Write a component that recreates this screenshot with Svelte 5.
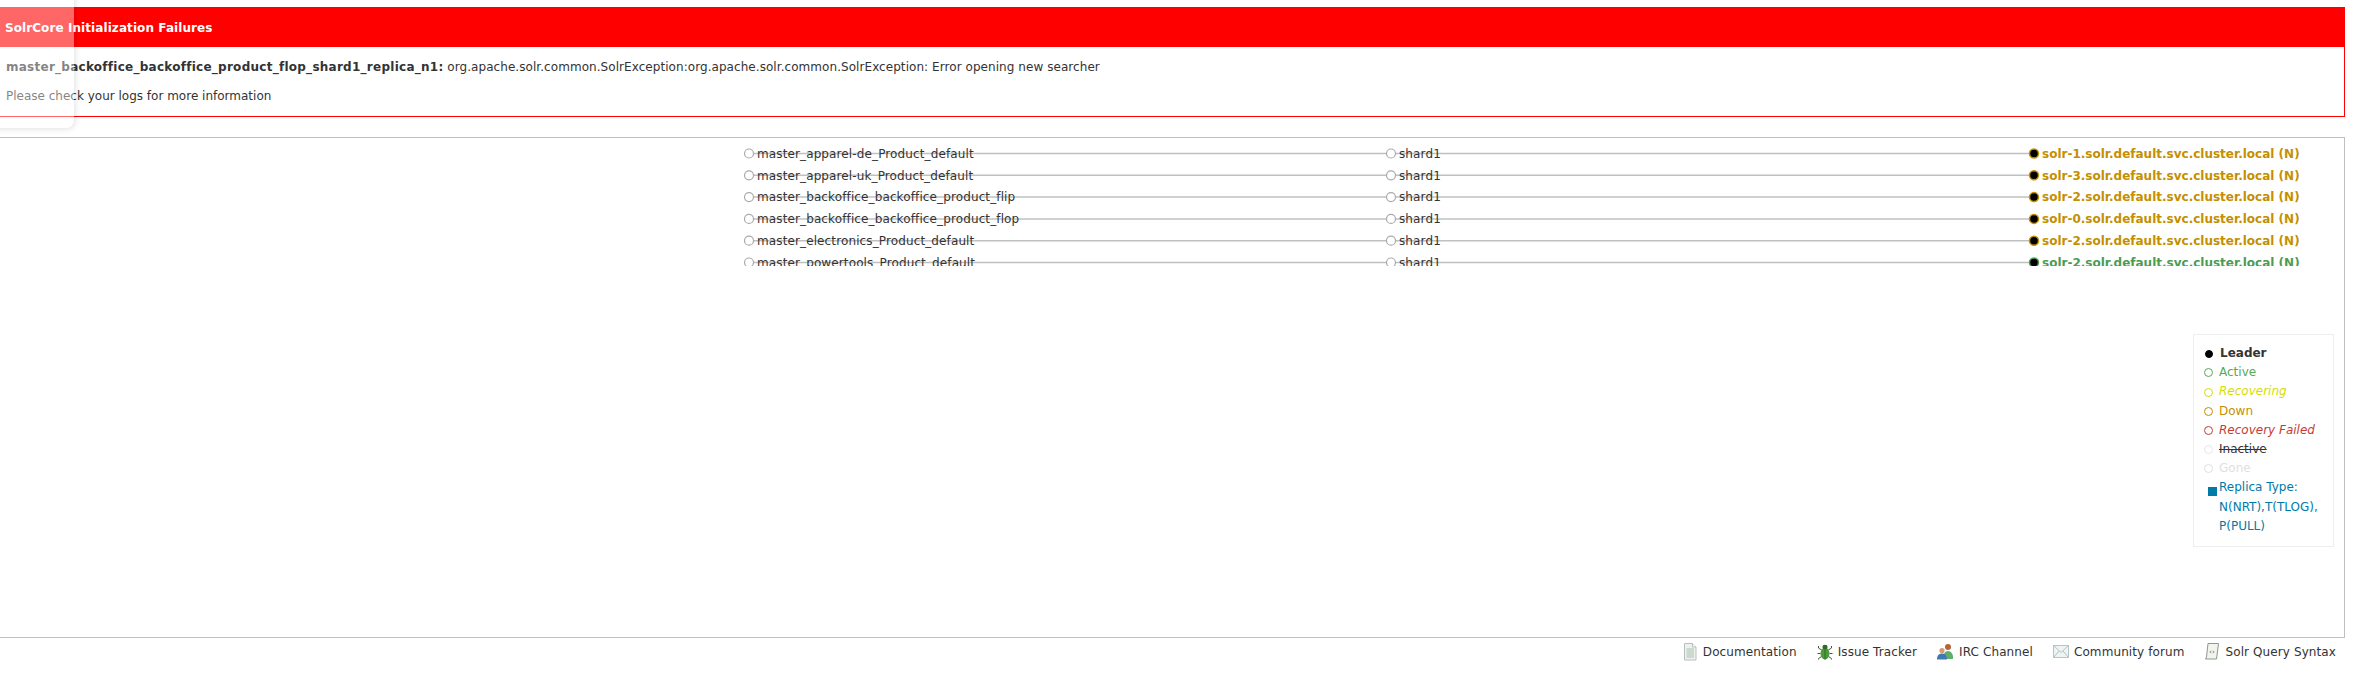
<script>
  const cols = { down: '#c48f00', active: '#4a9c52' };
  const rows = [
    ['master_apparel-de_Product_default', 'solr-1.solr.default.svc.cluster.local (N)', 'down'],
    ['master_apparel-uk_Product_default', 'solr-3.solr.default.svc.cluster.local (N)', 'down'],
    ['master_backoffice_backoffice_product_flip', 'solr-2.solr.default.svc.cluster.local (N)', 'down'],
    ['master_backoffice_backoffice_product_flop', 'solr-0.solr.default.svc.cluster.local (N)', 'down'],
    ['master_electronics_Product_default', 'solr-2.solr.default.svc.cluster.local (N)', 'down'],
    ['master_powertools_Product_default', 'solr-2.solr.default.svc.cluster.local (N)', 'active']
  ];
  const rowY = (i) => 15.5 + i * 21.8;
</script>

<div class="page">
  <div class="scrim"></div>

  <section class="errors">
    <h2>SolrCore Initialization Failures</h2>
    <div class="err-body">
      <p class="err-line"><strong>master_backoffice_backoffice_product_flop_shard1_replica_n1:</strong> org.apache.solr.common.SolrException:org.apache.solr.common.SolrException: Error opening new searcher</p>
      <p class="err-hint">Please check your logs for more information</p>
    </div>
  </section>

  <section class="graph">
    <svg class="tree" width="2345" height="128" viewBox="0 0 2345 128">
      {#each rows as r, i}
        <line x1="749" y1={rowY(i)} x2="1391" y2={rowY(i)} class="link" />
        <line x1="1391" y1={rowY(i)} x2="2033" y2={rowY(i)} class="link" />
        <circle cx="749" cy={rowY(i)} r="4.5" class="open" />
        <text x="757" y={rowY(i) + 4.3} class="t-coll">{r[0]}</text>
        <circle cx="1391" cy={rowY(i)} r="4.5" class="open" />
        <text x="1399" y={rowY(i) + 4.3} class="t-coll">shard1</text>
        <circle cx="2034" cy={rowY(i)} r="4.5" fill="#000" stroke={cols[r[2]]} stroke-width="1.5" />
        <text x="2042" y={rowY(i) + 4.3} class="t-rep" fill={cols[r[2]]}>{r[1]}</text>
      {/each}
    </svg>

    <ul class="legend">
      <li class="leader"><i class="dot"></i>Leader</li>
      <li class="active"><i class="dot"></i>Active</li>
      <li class="recovering"><i class="dot"></i>Recovering</li>
      <li class="down"><i class="dot"></i>Down</li>
      <li class="failed"><i class="dot"></i>Recovery Failed</li>
      <li class="inactive"><i class="dot"></i><span>Inactive</span></li>
      <li class="gone"><i class="dot"></i>Gone</li>
      <li class="type"><i class="sq"></i><span>Replica Type: N(NRT),T(TLOG), P(PULL)</span></li>
    </ul>
  </section>

  <footer>
    <a href="#doc">
      <svg width="16" height="18" viewBox="0 0 16 18"><path d="M2.500.5h8l3.500 3.500v13h-11.500z" fill="#eef2ee" stroke="#b5bfc0"/><path d="M10.500.5v3.500h3.500" fill="#fff" stroke="#b5bfc0"/><path d="M4.500 6h7.500M4.500 8h7.500M4.500 10h7.500M4.500 12h7.500M4.500 14h7.500" stroke="#a9c0ae"/></svg>
      Documentation
    </a>
    <a href="#bug">
      <svg width="16" height="16" viewBox="0 0 16 16"><path d="M4.500 6 1.500 4V2M3.500 9.500H.5M4.500 12.500l-3 2v1M11.500 6l3-2V2M12.500 9.500h3M11.500 12.500l3 2v1" stroke="#3e5c34" fill="none"/><ellipse cx="8" cy="9.500" rx="4.500" ry="6" fill="#4e9a3c"/><path d="M8 5v10.500" stroke="#2f6a2a"/><ellipse cx="8" cy="3" rx="2.600" ry="2.200" fill="#2f6a2a"/></svg>
      Issue Tracker
    </a>
    <a href="#irc">
      <svg width="17" height="17" viewBox="0 0 17 17"><circle cx="11" cy="4" r="3" fill="#b5653a"/><path d="M6 16c0-5 2-8 5-8s5 3 5 6v2z" fill="#5fae6a"/><circle cx="5" cy="7.500" r="2.600" fill="#d99a6c"/><path d="M0 16.500c0-4 2-6 5-6s5 2 5 6z" fill="#3f78b5"/></svg>
      IRC Channel
    </a>
    <a href="#forum">
      <svg width="16" height="13" viewBox="0 0 16 13"><rect x=".5" y=".5" width="15" height="12" fill="#eef3f3" stroke="#b5c4c4"/><path d="m.5.5 7.500 7 7.500-7M.5 12.500l5.500-6.500M15.500 12.500l-5.500-6.500" fill="none" stroke="#b5c4c4"/></svg>
      Community forum
    </a>
    <a href="#query">
      <svg width="16" height="17" viewBox="0 0 16 17"><path d="M4 .5h10.500l-2 15.500h-11l1-2z" fill="#f2f5ef" stroke="#8a9a8a"/><text x="5" y="11" class="code">‹›</text></svg>
      Solr Query Syntax
    </a>
  </footer>
</div>

<style>
  :global(body) {
    margin: 0;
    background: #fff;
    font-family: "DejaVu Sans", Verdana, sans-serif;
    font-size: 12px;
    color: #333;
  }
  .page {
    position: relative;
    width: 2360px;
    height: 687px;
    overflow: hidden;
    padding-top: 7px;
    box-sizing: border-box;
  }
  .scrim {
    position: absolute;
    left: -20px;
    top: -20px;
    width: 94px;
    height: 148px;
    background: rgba(255, 255, 255, 0.4);
    border-radius: 0 0 8px 0;
    box-shadow: 1px 1px 6px rgba(0, 0, 0, 0.12);
    z-index: 3;
  }
  .errors {
    margin-right: 15px;
    height: 110px;
    box-sizing: border-box;
    border: 1px solid #f00;
    border-left: 0;
  }
  h2 {
    margin: 0;
    height: 39px;
    line-height: 40px;
    padding-left: 5px;
    background: #f00;
    color: #fff;
    font-size: 12px;
    font-weight: bold;
    letter-spacing: 0.08px;
  }
  .err-body {
    padding: 13px 5px 0 6px;
    line-height: 14px;
    letter-spacing: 0.06px;
  }
  .err-line, .err-hint {
    margin: 0;
  }
  .err-line strong {
    letter-spacing: 0.26px;
  }
  .err-hint {
    margin-top: 15px;
    letter-spacing: 0;
  }
  .graph {
    position: relative;
    margin: 20px 15px 0 0;
    height: 501px;
    box-sizing: border-box;
    border: 1px solid #c0c0c0;
    border-left: 0;
  }
  .tree {
    position: absolute;
    left: 0;
    top: 0;
    display: block;
  }
  .link {
    stroke: #c0c0c0;
    stroke-width: 1.5;
  }
  .open {
    fill: #fff;
    stroke: #aaa;
    stroke-width: 1.2;
  }
  .t-coll {
    font-size: 12px;
    fill: #333;
    letter-spacing: 0.12px;
  }
  .t-rep {
    font-size: 12px;
    font-weight: bold;
  }
  .legend {
    position: absolute;
    left: 2193px;
    top: 196px;
    width: 141px;
    height: 213px;
    box-sizing: border-box;
    margin: 0;
    padding: 9px 8px 0 10px;
    list-style: none;
    border: 1px solid #eee;
    line-height: 19.2px;
  }
  .legend li {
    display: flex;
    align-items: center;
  }
  .dot {
    width: 7px;
    height: 7px;
    border-radius: 50%;
    border: 1.5px solid currentColor;
    margin-right: 6px;
    flex: none;
    box-sizing: content-box;
  }
  .leader { font-weight: bold; }
  .leader .dot { background: #000; color: #000; width: 6px; height: 6px; border-width: 1px; margin: 0 7px 0 1px; }
  .active { color: #57a957; }
  .recovering { color: #d5dd00; font-style: italic; }
  .down { color: #c48f00; }
  .failed { color: #c43c35; font-style: italic; }
  .inactive .dot { color: #e6e6e6; }
  .inactive span { text-decoration: line-through; }
  .gone { color: #e0e0e0; }
  .legend .type {
    color: #007ba7;
    align-items: flex-start;
  }
  .sq {
    width: 9px;
    height: 9px;
    background: #007ba7;
    margin: 9px 2px 0 4px;
    flex: none;
  }
  footer {
    display: flex;
    justify-content: flex-end;
    align-items: center;
    gap: 20px;
    margin-right: 24px;
    height: 27px;
  }
  footer a {
    display: flex;
    align-items: center;
    gap: 5px;
    color: #333;
    text-decoration: none;
    letter-spacing: 0.1px;
  }
  .code {
    font-size: 7px;
    fill: #456;
  }
</style>
